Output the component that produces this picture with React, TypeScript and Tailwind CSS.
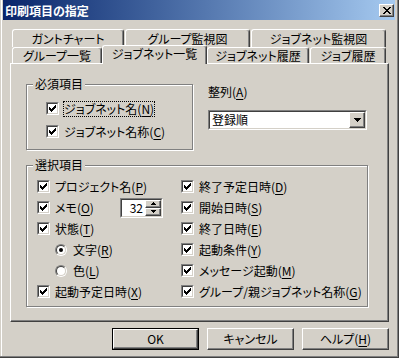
import React from "react";

const raised =
  "border border-t-white border-l-white border-b-[#404040] border-r-[#404040] shadow-[inset_-1px_-1px_0_#808080]";
const sunkenOuter = "border border-t-[#808080] border-l-[#808080] border-b-white border-r-white";
const sunkenInner = "border border-t-[#404040] border-l-[#404040] border-b-[#d4d0c8] border-r-[#d4d0c8]";

const Mn = ({ text, k }: { text: string; k: string }) => (
  <>
    {text}(<u className="underline-offset-[2px]">{k}</u>)
  </>
);

const CheckBox = () => (
  <span className={`flex h-[13px] w-[13px] shrink-0 ${sunkenOuter}`}>
    <span className={`flex flex-1 items-center justify-center bg-white ${sunkenInner}`}>
      <svg width="7" height="7" viewBox="0 0 7 7" shapeRendering="crispEdges">
        <path d="M0 2h1v3H0zM1 3h1v3H1zM2 4h1v3H2zM3 3h1v3H3zM4 2h1v3H4zM5 1h1v3H5zM6 0h1v3H6z" fill="#000" />
      </svg>
    </span>
  </span>
);

const Radio = ({ on }: { on?: boolean }) => (
  <span className={`flex h-[12px] w-[12px] shrink-0 rounded-full ${sunkenOuter}`}>
    <span className={`flex flex-1 items-center justify-center rounded-full bg-white ${sunkenInner}`}>
      {on && <span className="h-[4px] w-[4px] rounded-full bg-black" />}
    </span>
  </span>
);

const Group = ({ title, className, children }: { title: string; className: string; children: React.ReactNode }) => (
  <div className={`relative border border-[#808080] shadow-[1px_1px_0_#fff,inset_1px_1px_0_#fff] ${className}`}>
    <span className="absolute left-[6px] top-[-9px] bg-[#d4d0c8] px-[2px] leading-[16px]">{title}</span>
    {children}
  </div>
);

const Tab = ({ label, className, sel }: { label: string; className: string; sel?: boolean }) => (
  <div
    className={`flex shrink-0 items-center justify-center rounded-t-[3px] border-t border-l border-r border-t-white border-l-white border-r-[#404040] bg-[#d4d0c8] shadow-[inset_-1px_0_0_#808080] ${
      sel ? "relative z-10 mb-[-1px] h-[19px] pb-[2px]" : ""
    } ${className}`}
  >
    {label}
  </div>
);

const Row = ({ children }: { children: React.ReactNode }) => (
  <div className="flex h-[21px] items-center">{children}</div>
);

const Item = ({ text, k }: { text: string; k: string }) => (
  <Row>
    <CheckBox />
    <span className="ml-[5px] whitespace-nowrap leading-[16px]">
      <Mn text={text} k={k} />
    </span>
  </Row>
);

const Btn = ({ children, def }: { children: React.ReactNode; def?: boolean }) => (
  <div className={`h-[22px] w-[87px] ${def ? "border border-black" : ""}`}>
    <div className={`flex h-full w-full items-center justify-center ${raised}`}>{children}</div>
  </div>
);

export default function App() {
  return (
    <div className="flex h-[358px] w-[399px] flex-col overflow-hidden bg-[#d4d0c8] text-[12px] text-black font-['Noto_Sans_CJK_JP',sans-serif] [font-feature-settings:'palt'] shadow-[inset_-1px_-1px_0_#404040,inset_-2px_-2px_0_#808080,inset_1px_0_0_#d4d0c8,inset_2px_0_0_#fff]">
      {/* caption */}
      <div className="ml-[3px] flex h-[20px] w-[392px] items-center justify-between bg-linear-to-r from-[#0a246a] to-[#a6caf0] pl-[2px] pr-[1px]">
        <span className="pt-[2px] font-bold leading-[16px] text-white">印刷項目の指定</span>
        <span className={`flex h-[13px] w-[15px] items-center justify-center bg-[#d4d0c8] ${raised}`}>
          <svg width="8" height="7" viewBox="0 0 8 7" shapeRendering="crispEdges">
            <path d="M0 0h2v1H0zM6 0h2v1H6zM1 1h2v1H1zM5 1h2v1H5zM2 2h4v1H2zM3 3h2v1H3zM2 4h4v1H2zM1 5h2v1H1zM5 5h2v1H5zM0 6h2v1H0zM6 6h2v1H6z" fill="#000" />
          </svg>
        </span>
      </div>

      {/* tabs */}
      <div className="ml-[12px] mt-[9px] flex h-[18px] gap-[1px]">
        <Tab label="ガントチャート" className="h-[18px] w-[112px]" />
        <Tab label="グループ監視図" className="h-[18px] w-[125px]" />
        <Tab label="ジョブネット監視図" className="h-[18px] w-[135px]" />
      </div>
      <div className="ml-[12px] flex h-[16px] items-end">
        <Tab label="グループ一覧" className="h-[16px] w-[90px]" />
        <Tab label="ジョブネット一覧" className="w-[105px]" sel />
        <Tab label="ジョブネット履歴" className="h-[16px] w-[102px]" />
        <Tab label="ジョブ履歴" className="ml-[1px] h-[16px] w-[76px]" />
      </div>

      {/* panel */}
      <div className={`ml-[10px] h-[259px] w-[379px] pl-[15px] pt-[20px] ${raised}`}>
        <div className="flex">
          <Group title="必須項目" className="h-[66px] w-[167px]">
            <div className="pl-[19px] pt-[12px]">
              <div className="flex h-[23px] items-center">
                <CheckBox />
                <span className="ml-[4px] border border-dotted border-black leading-[14px]">
                  <Mn text="ジョブネット名" k="N" />
                </span>
              </div>
              <div className="flex h-[23px] items-center">
                <CheckBox />
                <span className="ml-[4px] border border-transparent leading-[14px]">
                  <Mn text="ジョブネット名称" k="C" />
                </span>
              </div>
            </div>
          </Group>
          <div className="ml-[15px]">
            <div className="h-[16px] leading-[16px]">
              <Mn text="整列" k="A" />
            </div>
            <div className={`mt-[10px] flex h-[20px] w-[159px] ${sunkenOuter}`}>
              <div className={`flex flex-1 items-center bg-white ${sunkenInner}`}>
                <span className="flex-1 pl-[2px] leading-[16px]">登録順</span>
                <span className={`flex h-[16px] w-[16px] items-center justify-center bg-[#d4d0c8] ${raised}`}>
                  <svg width="7" height="4" viewBox="0 0 7 4" shapeRendering="crispEdges">
                    <path d="M0 0h7v1H0zM1 1h5v1H1zM2 2h3v1H2zM3 3h1v1H3z" fill="#000" />
                  </svg>
                </span>
              </div>
            </div>
          </div>
        </div>

        <Group title="選択項目" className="mt-[15px] h-[142px] w-[342px]">
          <div className="flex pl-[10px] pt-[10px]">
            <div className="w-[144px]">
              <Item text="プロジェクト名" k="P" />
              <Row>
                <CheckBox />
                <span className="ml-[5px] w-[65px] leading-[16px]">
                  <Mn text="メモ" k="O" />
                </span>
                <div className={`flex h-[20px] w-[43px] ${sunkenOuter}`}>
                  <div className={`flex flex-1 bg-white ${sunkenInner}`}>
                    <span className="flex-1 pr-[2px] text-right leading-[16px]">32</span>
                    <div className="flex w-[16px] flex-col">
                      <span className={`flex h-[8px] items-center justify-center bg-[#d4d0c8] ${raised}`}>
                        <svg width="5" height="3" viewBox="0 0 5 3" shapeRendering="crispEdges">
                          <path d="M2 0h1v1H2zM1 1h3v1H1zM0 2h5v1H0z" fill="#000" />
                        </svg>
                      </span>
                      <span className={`flex h-[8px] items-center justify-center bg-[#d4d0c8] ${raised}`}>
                        <svg width="5" height="3" viewBox="0 0 5 3" shapeRendering="crispEdges">
                          <path d="M0 0h5v1H0zM1 1h3v1H1zM2 2h1v1H2z" fill="#000" />
                        </svg>
                      </span>
                    </div>
                  </div>
                </div>
              </Row>
              <Item text="状態" k="T" />
              <Row>
                <span className="ml-[18px] flex items-center">
                  <Radio on />
                  <span className="ml-[6px] leading-[16px]">
                    <Mn text="文字" k="R" />
                  </span>
                </span>
              </Row>
              <Row>
                <span className="ml-[18px] flex items-center">
                  <Radio />
                  <span className="ml-[6px] leading-[16px]">
                    <Mn text="色" k="L" />
                  </span>
                </span>
              </Row>
              <Item text="起動予定日時" k="X" />
            </div>
            <div>
              <Item text="終了予定日時" k="D" />
              <Item text="開始日時" k="S" />
              <Item text="終了日時" k="E" />
              <Item text="起動条件" k="Y" />
              <Item text="メッセージ起動" k="M" />
              <Item text="グループ/親ジョブネット名称" k="G" />
            </div>
          </div>
        </Group>
      </div>

      {/* buttons */}
      <div className="mt-[6px] flex justify-end gap-[8px] pr-[10px]">
        <Btn def>OK</Btn>
        <Btn>キャンセル</Btn>
        <Btn>
          <Mn text="ヘルプ" k="H" />
        </Btn>
      </div>
    </div>
  );
}
